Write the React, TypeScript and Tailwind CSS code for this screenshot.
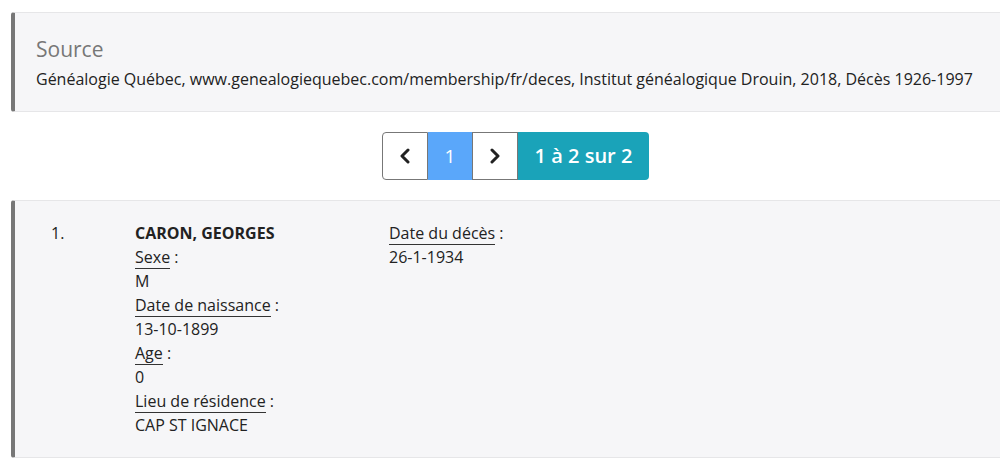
import React from "react";

const Label = ({ children }: { children: React.ReactNode }) => (
  <div>
    <span className="border-b border-[#333]">{children}</span> :
  </div>
);

const Chevron = ({ dir }: { dir: "l" | "r" }) => (
  <svg width="14" height="16" viewBox="0 0 14 16" fill="none">
    <path
      d={dir === "l" ? "M10 2 L4 8 L10 14" : "M4 2 L10 8 L4 14"}
      stroke="#222"
      strokeWidth="3"
      strokeLinecap="round"
      strokeLinejoin="round"
    />
  </svg>
);

export default function App() {
  return (
    <div className="bg-white w-[1000px] h-[473px] overflow-hidden pl-[11px] pt-[12px] text-[#222]" style={{ fontFamily: '"Open Sans", sans-serif' }}>
      <div className="w-[1000px] bg-[#f6f6f8] border-t border-b border-[#e6e6e8] border-l-4 border-l-[#777] rounded-l-[3px] pl-[21px] pt-[22px] pb-[20px]">
        <div className="text-[21px] leading-[28px] text-[#777]">Source</div>
        <div className="text-[16px] leading-[24px] mt-[4px]">
          Généalogie Québec, www.genealogiequebec.com/membership/fr/deces, Institut généalogique Drouin, 2018, Décès 1926-1997
        </div>
      </div>

      <div className="flex justify-center mt-[20px] w-[1009px]">
        <div className="flex h-[48px] text-[19px]">
          <div className="w-[46px] flex items-center justify-center bg-white border border-[#777] rounded-l-[4px]">
            <Chevron dir="l" />
          </div>
          <div className="w-[44px] flex items-center justify-center bg-[#5aa7fa] text-white border-y border-[#5aa7fa]">1</div>
          <div className="w-[46px] flex items-center justify-center bg-white border border-[#777]">
            <Chevron dir="r" />
          </div>
          <div className="w-[131px] flex items-center justify-center bg-[#1aa3b9] text-white rounded-r-[4px] font-semibold text-[20px]">
            1 à 2 sur 2
          </div>
        </div>
      </div>

      <div className="w-[1000px] mt-[20px] bg-[#f6f6f8] border-t border-b border-[#e6e6e8] border-l-4 border-l-[#777] rounded-l-[3px] pt-[20px] pb-[20px] text-[16px] leading-[24px] flex h-[258px]">
        <div className="w-[120px] pl-[36px]">1.</div>
        <div className="w-[254px]">
          <div className="font-bold">CARON, GEORGES</div>
          <Label>Sexe</Label>
          <div>M</div>
          <Label>Date de naissance</Label>
          <div>13-10-1899</div>
          <Label>Age</Label>
          <div>0</div>
          <Label>Lieu de résidence</Label>
          <div>CAP ST IGNACE</div>
        </div>
        <div>
          <Label>Date du décès</Label>
          <div>26-1-1934</div>
        </div>
      </div>
    </div>
  );
}
